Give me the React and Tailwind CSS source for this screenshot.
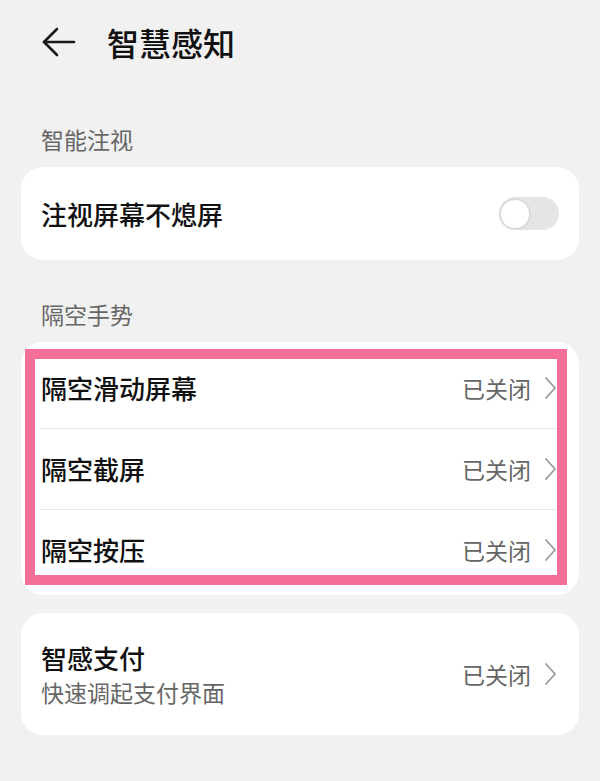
import React from "react";

const font = { fontFamily: '"Noto Sans CJK SC", "Noto Sans", sans-serif' };

function BackArrow() {
  return (
    <svg width="34" height="30" viewBox="0 0 34 30" fill="none" stroke="#1a1a1a" strokeWidth="2.6" strokeLinecap="round" strokeLinejoin="round">
      <path d="M2 15 H32" />
      <path d="M15 2 L2 15 L15 28" />
    </svg>
  );
}

function Chevron() {
  return (
    <svg width="12" height="22" viewBox="0 0 12 22" fill="none" stroke="#9a9a9a" strokeWidth="1.8" strokeLinecap="round" strokeLinejoin="round">
      <path d="M2 1 L11 11 L2 21" />
    </svg>
  );
}

function Toggle() {
  return (
    <div className="relative h-[33px] w-[60px] rounded-full bg-[#e5e5e5]">
      <div className="absolute left-0 top-[0.5px] h-[32px] w-[32px] rounded-full border-2 border-[#dadada] bg-white" />
    </div>
  );
}

function SectionLabel({ children, top }) {
  return (
    <div className={`${top} pb-[13px] pl-[20px] text-[23px] leading-[30px] text-[#666666]`}>
      {children}
    </div>
  );
}

function Status() {
  return (
    <div className="flex items-center gap-[13px]">
      <span className="text-[23px] leading-[30px] text-[#666666]">已关闭</span>
      <Chevron />
    </div>
  );
}

const gestureRows = ["隔空滑动屏幕", "隔空截屏", "隔空按压"];

export default function App() {
  return (
    <div className="h-[781px] w-[600px] overflow-hidden bg-[#f1f1f1] px-[21px]" style={font}>
      <div className="-ml-[21px] flex h-[84px] items-center pl-[42px]">
        <BackArrow />
        <span className="ml-[31px] text-[32px] font-medium leading-[40px] text-[#111111]">智慧感知</span>
      </div>

      <SectionLabel top="pt-[40px]">智能注视</SectionLabel>

      <div className="flex h-[93px] items-center justify-between rounded-[22px] bg-white pl-[20px] pr-[20px]">
        <span className="text-[26px] font-medium leading-[34px] text-[#111111]">注视屏幕不熄屏</span>
        <Toggle />
      </div>

      <SectionLabel top="pt-[39px]">隔空手势</SectionLabel>

      <div className="relative rounded-[22px] bg-white pb-[5px] pt-[5px]">
        {gestureRows.map((label, i) => (
          <div key={label} className="px-[20px]">
            <div className={`flex h-[81px] items-center justify-between pr-[3px] ${i > 0 ? "border-t border-[#e6e6e6]" : ""}`}>
              <span className="text-[26px] font-medium leading-[34px] text-[#111111]">{label}</span>
              <Status />
            </div>
          </div>
        ))}
        <div className="pointer-events-none absolute bottom-[10px] left-[4px] right-[12px] top-[7px] border-[10px] border-[#f36f97]" />
      </div>

      <div className="mt-[18px] flex h-[122px] items-center justify-between rounded-[22px] bg-white pl-[20px] pr-[23px]">
        <div className="flex flex-col">
          <span className="text-[26px] font-medium leading-[36px] text-[#111111]">智感支付</span>
          <span className="text-[23px] leading-[32px] text-[#666666]">快速调起支付界面</span>
        </div>
        <Status />
      </div>
    </div>
  );
}
